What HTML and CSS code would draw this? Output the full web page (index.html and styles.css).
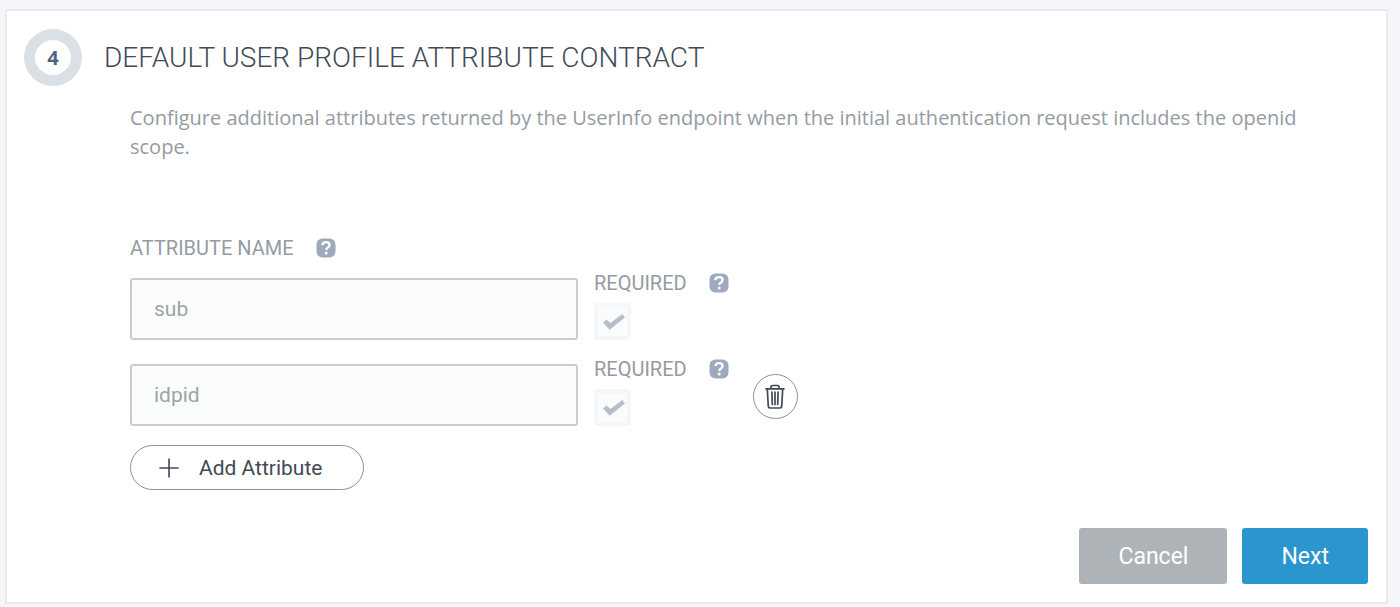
FILE: index.html
```html
<!DOCTYPE html>
<html lang="en">
<head>
<meta charset="utf-8">
<meta name="viewport" content="width=device-width, initial-scale=1">
<title>Default User Profile Attribute Contract</title>
<link rel="stylesheet" href="styles.css">
</head>
<body>
<svg class="sprite" aria-hidden="true">
  <symbol id="icon-help" viewBox="0 0 20 20">
    <rect x="0.5" y="0.5" width="19" height="19" rx="6" fill="#9ea9bd"/>
    <path d="M6.400 7.100C6.600 5 8 4.200 10 4.200c2.200 0 3.600 1.100 3.600 2.800 0 1.400-.9 2-1.800 2.600-.9.600-1.600.9-1.600 2.300" fill="none" stroke="#fff" stroke-width="2.300"/>
    <circle cx="10.200" cy="15" r="1.500" fill="#fff"/>
  </symbol>
  <symbol id="icon-check" viewBox="0 0 22 16">
    <path d="M0 8.600 3.600 5.400 7.400 9.100 19.200 0 22 3.600 6.600 15.800Z" fill="#b4bfca"/>
  </symbol>
</svg>
<main class="panel">
  <header class="panel-header">
    <span class="step">4</span>
    <h1 class="title">DEFAULT USER PROFILE ATTRIBUTE CONTRACT</h1>
  </header>
  <form class="panel-body">
    <p class="description">Configure additional attributes returned by the UserInfo endpoint when the initial authentication request includes the openid scope.</p>
    <div class="label-row name-label">
      <label for="attr-sub">ATTRIBUTE NAME</label>
      <button class="help" type="button" aria-label="Attribute name help"><svg class="help-icon"><use href="#icon-help"/></svg></button>
    </div>
    <div class="rows">
      <div class="row">
        <input class="text-field" id="attr-sub" type="text" value="sub" disabled>
        <div class="required">
          <div class="label-row">
            <label for="req-sub">REQUIRED</label>
            <button class="help" type="button" aria-label="Required help"><svg class="help-icon"><use href="#icon-help"/></svg></button>
          </div>
          <span class="check">
            <input class="check-input" id="req-sub" type="checkbox" checked disabled>
            <svg class="check-icon" aria-hidden="true"><use href="#icon-check"/></svg>
          </span>
        </div>
      </div>
      <div class="row">
        <input class="text-field" id="attr-idpid" type="text" value="idpid" aria-label="Attribute name" disabled>
        <div class="required">
          <div class="label-row">
            <label for="req-idpid">REQUIRED</label>
            <button class="help" type="button" aria-label="Required help"><svg class="help-icon"><use href="#icon-help"/></svg></button>
          </div>
          <span class="check">
            <input class="check-input" id="req-idpid" type="checkbox" checked disabled>
            <svg class="check-icon" aria-hidden="true"><use href="#icon-check"/></svg>
          </span>
        </div>
        <button class="delete" type="button" aria-label="Delete attribute">
          <svg class="trash" viewBox="0 0 20 25" fill="none" stroke="#414a55" stroke-width="1.700" stroke-linecap="round" stroke-linejoin="round" aria-hidden="true">
            <path d="M1 4.800h18M6 4.500V2.700Q6 1.500 7.500 1.500h5Q14 1.500 14 2.700v1.800"/>
            <path d="M2.300 5 3.300 22.400Q3.400 24 5 24h10q1.600 0 1.700-1.600L17.700 5M6.900 8l.4 12.500M10 8v12.500M13.100 8l-.4 12.500"/>
          </svg>
        </button>
      </div>
    </div>
    <button class="add" type="button">
      <svg class="plus" viewBox="0 0 20 20" fill="none" stroke="#414a55" stroke-width="1.600" stroke-linecap="round" aria-hidden="true"><path d="M10 1v18M1 10h18"/></svg>
      Add Attribute
    </button>
  </form>
  <footer class="actions">
    <button class="action cancel" type="button">Cancel</button>
    <button class="action next" type="button">Next</button>
  </footer>
</main>
</body>
</html>
```
FILE: styles.css
```css
* {
  box-sizing: border-box;
}

body {
  margin: 0;
  padding: 9px 12px 3px 5px;
  background: #f5f6f9;
  color: #414a55;
  font-family: Roboto, "Liberation Sans", sans-serif;
}

button,
input {
  margin: 0;
  font-family: inherit;
}

.sprite {
  position: absolute;
  width: 0;
  height: 0;
}

.panel {
  padding: 18px 18px 18px 17px;
  border: 2px solid #e8eaed;
  background: #fff;
}

.panel-header {
  display: flex;
  align-items: center;
  gap: 22px;
}

.step {
  display: flex;
  flex: none;
  align-items: center;
  justify-content: center;
  width: 58px;
  height: 57px;
  border: 11px solid #dae0e4;
  border-radius: 50%;
  color: #4c6482;
  font-family: "Open Sans", sans-serif;
  font-size: 20px;
  font-weight: 700;
}

.title {
  margin: 0;
  font-size: 28px;
  font-weight: 300;
  line-height: 36px;
}

.panel-body {
  padding: 17px 40px 0 106px;
}

.description {
  margin: 0 0 75px;
  color: #959ba3;
  font-family: "Open Sans", sans-serif;
  font-size: 20px;
  line-height: 29px;
}

.label-row {
  display: flex;
  align-items: center;
  gap: 22px;
  color: #959ba3;
  font-size: 20px;
  line-height: 24px;
}

.name-label {
  margin-bottom: 11px;
}

.help {
  display: flex;
  padding: 0;
  border: 0;
  background: none;
}

.help-icon {
  width: 20px;
  height: 20px;
}

.rows {
  display: grid;
  gap: 17px;
}

.row {
  display: flex;
  align-items: flex-end;
}

.text-field {
  flex: 0 1 448px;
  min-width: 0;
  height: 62px;
  margin-right: 16px;
  padding: 0 22px;
  border: 2px solid #c9cdd1;
  border-radius: 3px;
  background: #fbfdfc;
  color: #9da3a9;
  font-size: 21px;
}

.required {
  display: grid;
  gap: 8px;
}

.check {
  display: grid;
  place-items: center;
  width: 37px;
  height: 37px;
}

.check-input,
.check-icon {
  grid-area: 1 / 1;
}

.check-input {
  width: 37px;
  height: 37px;
  border: 4px solid #f5f6f8;
  border-radius: 3px;
  background: #fafbfd;
  appearance: none;
}

.check-icon {
  width: 22px;
  height: 16px;
  margin-left: 3px;
  pointer-events: none;
}

.delete {
  display: flex;
  align-items: center;
  justify-content: center;
  width: 45px;
  height: 45px;
  margin: 0 0 7px 24px;
  padding: 0;
  border: 1px solid #8b929b;
  border-radius: 50%;
  background: #fff;
}

.trash {
  width: 20px;
  height: 25px;
}

.add {
  display: flex;
  align-items: center;
  gap: 20px;
  height: 45px;
  margin-top: 19px;
  padding: 0 41px 0 28px;
  border: 1px solid #8b929b;
  border-radius: 23px;
  background: #fff;
  color: #414a55;
  font-size: 21px;
}

.plus {
  width: 20px;
  height: 20px;
}

.actions {
  display: flex;
  justify-content: flex-end;
  gap: 15px;
  margin-top: 38px;
}

.action {
  height: 56px;
  padding: 0 39px;
  border: 0;
  border-radius: 3px;
  color: #fff;
  font-size: 23px;
}

.cancel {
  background: #aeb3b7;
}

.next {
  background: #2b96cd;
}
```
